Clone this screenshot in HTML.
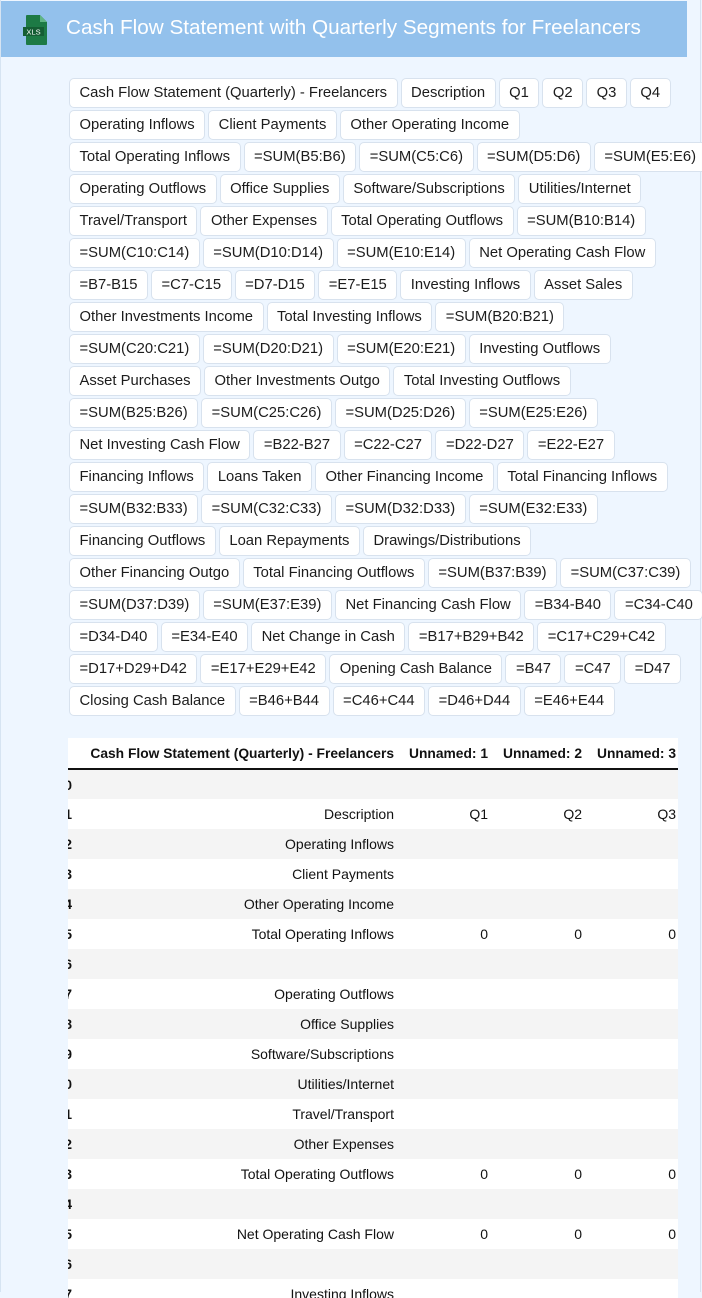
<!DOCTYPE html>
<html><head><meta charset="utf-8"><style>
*{box-sizing:border-box;margin:0;padding:0}
body{width:702px;height:1292px;overflow:hidden;background:#eef6ff;font-family:"Liberation Sans",Arial,sans-serif;position:relative}
.frame{position:absolute;left:0;top:0;width:701px;height:1292px;border-left:1px solid #d6e4f2;border-right:1px solid #d6e4f2}
.hdr{position:absolute;left:1px;top:1px;width:686px;height:56px;background:#93c1ec}
.hdr .t{position:absolute;left:65px;top:15px;color:#fff;font-size:20.7px;white-space:nowrap}
.icon{position:absolute;left:21px;top:13px}
.btns{position:absolute;left:69px;top:78px}
.row{display:flex;gap:3px;margin-bottom:2px;height:30px}
.b{height:30px;line-height:28px;padding:0 9.5px;background:#fff;border:1px solid #d8e2ee;border-radius:5px;font-size:14.8px;color:#1c1c1c;white-space:nowrap}
.tw{position:absolute;left:68px;top:738px;width:610px;height:560px;overflow:hidden;background:#fff}
table{border-collapse:collapse;margin-left:-26px;width:644px;font-family:"Liberation Sans",Arial,sans-serif;table-layout:fixed}
td,th{height:30px;padding:0 10px;text-align:right;font-size:14px;color:#111;white-space:nowrap}
th{font-size:13.8px;font-weight:bold;border-bottom:2px solid #111;height:31px;padding:0 10px 0 0}
td.i{font-weight:bold}
tbody tr:nth-child(odd){background:#f4f4f4}
</style></head><body>
<div class="frame"></div>
<div class="hdr">
<svg class="icon" width="28" height="32" viewBox="0 0 28 32"><path d="M5 1h13l7 7v22a1 1 0 0 1-1 1H5a1 1 0 0 1-1-1V2a1 1 0 0 1 1-1z" fill="#1d7a45"/><path d="M18 1v7h7z" fill="#5fb584"/><rect x="1" y="13" width="21" height="9" fill="#155e34"/><text x="11.5" y="20.5" font-size="7.5" fill="#fff" text-anchor="middle" font-family="Liberation Sans,sans-serif">XLS</text></svg>
<div class="t">Cash Flow Statement with Quarterly Segments for Freelancers</div>
</div>
<div class="btns">
<div class="row"><span class="b">Cash Flow Statement (Quarterly) - Freelancers</span><span class="b">Description</span><span class="b">Q1</span><span class="b">Q2</span><span class="b">Q3</span><span class="b">Q4</span></div>
<div class="row"><span class="b">Operating Inflows</span><span class="b">Client Payments</span><span class="b">Other Operating Income</span></div>
<div class="row"><span class="b">Total Operating Inflows</span><span class="b">=SUM(B5:B6)</span><span class="b">=SUM(C5:C6)</span><span class="b">=SUM(D5:D6)</span><span class="b">=SUM(E5:E6)</span></div>
<div class="row"><span class="b">Operating Outflows</span><span class="b">Office Supplies</span><span class="b">Software/Subscriptions</span><span class="b">Utilities/Internet</span></div>
<div class="row"><span class="b">Travel/Transport</span><span class="b">Other Expenses</span><span class="b">Total Operating Outflows</span><span class="b">=SUM(B10:B14)</span></div>
<div class="row"><span class="b">=SUM(C10:C14)</span><span class="b">=SUM(D10:D14)</span><span class="b">=SUM(E10:E14)</span><span class="b">Net Operating Cash Flow</span></div>
<div class="row"><span class="b">=B7-B15</span><span class="b">=C7-C15</span><span class="b">=D7-D15</span><span class="b">=E7-E15</span><span class="b">Investing Inflows</span><span class="b">Asset Sales</span></div>
<div class="row"><span class="b">Other Investments Income</span><span class="b">Total Investing Inflows</span><span class="b">=SUM(B20:B21)</span></div>
<div class="row"><span class="b">=SUM(C20:C21)</span><span class="b">=SUM(D20:D21)</span><span class="b">=SUM(E20:E21)</span><span class="b">Investing Outflows</span></div>
<div class="row"><span class="b">Asset Purchases</span><span class="b">Other Investments Outgo</span><span class="b">Total Investing Outflows</span></div>
<div class="row"><span class="b">=SUM(B25:B26)</span><span class="b">=SUM(C25:C26)</span><span class="b">=SUM(D25:D26)</span><span class="b">=SUM(E25:E26)</span></div>
<div class="row"><span class="b">Net Investing Cash Flow</span><span class="b">=B22-B27</span><span class="b">=C22-C27</span><span class="b">=D22-D27</span><span class="b">=E22-E27</span></div>
<div class="row"><span class="b">Financing Inflows</span><span class="b">Loans Taken</span><span class="b">Other Financing Income</span><span class="b">Total Financing Inflows</span></div>
<div class="row"><span class="b">=SUM(B32:B33)</span><span class="b">=SUM(C32:C33)</span><span class="b">=SUM(D32:D33)</span><span class="b">=SUM(E32:E33)</span></div>
<div class="row"><span class="b">Financing Outflows</span><span class="b">Loan Repayments</span><span class="b">Drawings/Distributions</span></div>
<div class="row"><span class="b">Other Financing Outgo</span><span class="b">Total Financing Outflows</span><span class="b">=SUM(B37:B39)</span><span class="b">=SUM(C37:C39)</span></div>
<div class="row"><span class="b">=SUM(D37:D39)</span><span class="b">=SUM(E37:E39)</span><span class="b">Net Financing Cash Flow</span><span class="b">=B34-B40</span><span class="b">=C34-C40</span></div>
<div class="row"><span class="b">=D34-D40</span><span class="b">=E34-E40</span><span class="b">Net Change in Cash</span><span class="b">=B17+B29+B42</span><span class="b">=C17+C29+C42</span></div>
<div class="row"><span class="b">=D17+D29+D42</span><span class="b">=E17+E29+E42</span><span class="b">Opening Cash Balance</span><span class="b">=B47</span><span class="b">=C47</span><span class="b">=D47</span></div>
<div class="row"><span class="b">Closing Cash Balance</span><span class="b">=B46+B44</span><span class="b">=C46+C44</span><span class="b">=D46+D44</span><span class="b">=E46+E44</span></div>
</div>
<div class="tw"><table>
<colgroup><col style="width:40px"><col style="width:322px"><col style="width:94px"><col style="width:94px"><col style="width:94px"></colgroup>
<thead><tr><th></th><th>Cash Flow Statement (Quarterly) - Freelancers</th><th>Unnamed: 1</th><th>Unnamed: 2</th><th>Unnamed: 3</th></tr></thead>
<tbody>
<tr><td class="i">0</td><td></td><td></td><td></td><td></td></tr>
<tr><td class="i">1</td><td>Description</td><td>Q1</td><td>Q2</td><td>Q3</td></tr>
<tr><td class="i">2</td><td>Operating Inflows</td><td></td><td></td><td></td></tr>
<tr><td class="i">3</td><td>Client Payments</td><td></td><td></td><td></td></tr>
<tr><td class="i">4</td><td>Other Operating Income</td><td></td><td></td><td></td></tr>
<tr><td class="i">5</td><td>Total Operating Inflows</td><td>0</td><td>0</td><td>0</td></tr>
<tr><td class="i">6</td><td></td><td></td><td></td><td></td></tr>
<tr><td class="i">7</td><td>Operating Outflows</td><td></td><td></td><td></td></tr>
<tr><td class="i">8</td><td>Office Supplies</td><td></td><td></td><td></td></tr>
<tr><td class="i">9</td><td>Software/Subscriptions</td><td></td><td></td><td></td></tr>
<tr><td class="i">10</td><td>Utilities/Internet</td><td></td><td></td><td></td></tr>
<tr><td class="i">11</td><td>Travel/Transport</td><td></td><td></td><td></td></tr>
<tr><td class="i">12</td><td>Other Expenses</td><td></td><td></td><td></td></tr>
<tr><td class="i">13</td><td>Total Operating Outflows</td><td>0</td><td>0</td><td>0</td></tr>
<tr><td class="i">14</td><td></td><td></td><td></td><td></td></tr>
<tr><td class="i">15</td><td>Net Operating Cash Flow</td><td>0</td><td>0</td><td>0</td></tr>
<tr><td class="i">16</td><td></td><td></td><td></td><td></td></tr>
<tr><td class="i">17</td><td>Investing Inflows</td><td></td><td></td><td></td></tr>
</tbody></table></div>
</body></html>
